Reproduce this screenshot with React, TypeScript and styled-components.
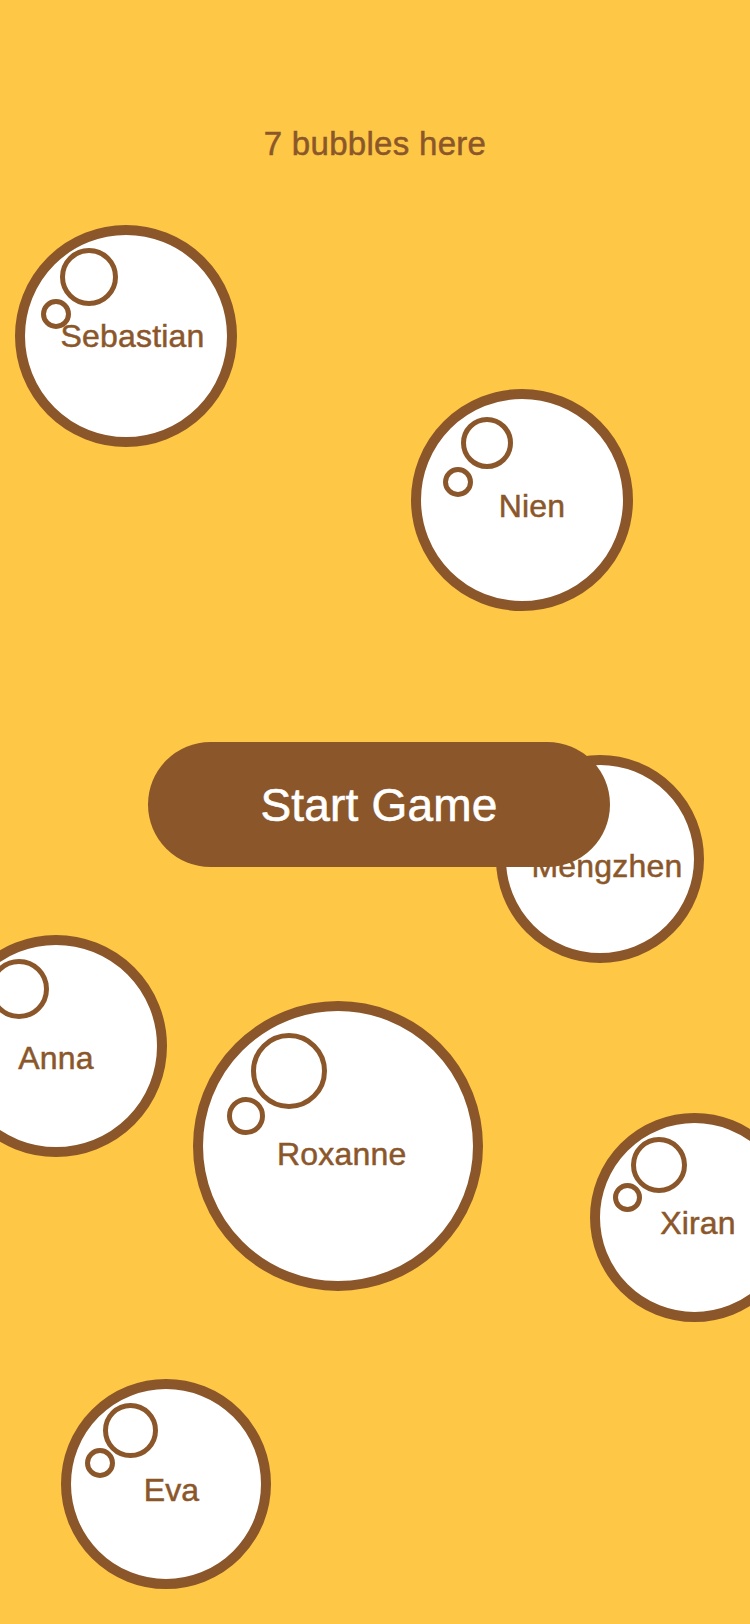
import React from "react";
import styled, { createGlobalStyle } from "styled-components";

const BROWN = "#8B572A";
const YELLOW = "#FEC846";

const GlobalStyle = createGlobalStyle`
  html, body {
    margin: 0;
    padding: 0;
    background: ${YELLOW};
  }
  * {
    box-sizing: border-box;
  }
`;

const Page = styled.main`
  position: relative;
  width: 750px;
  height: 1624px;
  overflow: hidden;
  background: ${YELLOW};
  font-family: "Liberation Sans", Arial, Helvetica, sans-serif;
`;

const Field = styled.div`
  position: absolute;
  inset: 0;
`;

const Bubble = styled.div<{ $x: number; $y: number; $size: number }>`
  position: absolute;
  left: ${(p) => p.$x}px;
  top: ${(p) => p.$y}px;
  width: ${(p) => p.$size}px;
  height: ${(p) => p.$size}px;
  border: 10px solid ${BROWN};
  border-radius: 50%;
  background: #ffffff;
  display: flex;
  align-items: center;
  justify-content: center;
`;

const Ring = styled.span<{ $x: number; $y: number; $size: number }>`
  position: absolute;
  left: ${(p) => p.$x - 10}px;
  top: ${(p) => p.$y - 10}px;
  width: ${(p) => p.$size}px;
  height: ${(p) => p.$size}px;
  border: 5px solid ${BROWN};
  border-radius: 50%;
`;

const Name = styled.span<{ $dx: number; $dy: number }>`
  margin-left: ${(p) => p.$dx * 2}px;
  margin-top: ${(p) => p.$dy * 2}px;
  font-size: 32px;
  line-height: 1.15;
  letter-spacing: 0.2px;
  color: ${BROWN};
  -webkit-text-stroke: 0.5px ${BROWN};
  white-space: nowrap;
`;

const Content = styled.div`
  position: relative;
  z-index: 1;
  display: flex;
  flex-direction: column;
  padding-top: 124px;
`;

const Title = styled.h1`
  margin: 0;
  text-align: center;
  font-size: 33px;
  line-height: 40px;
  font-weight: 400;
  letter-spacing: 0.3px;
  color: ${BROWN};
  -webkit-text-stroke: 0.5px ${BROWN};
`;

const StartButton = styled.button`
  align-self: flex-start;
  margin: 578px 0 0 148px;
  width: 462px;
  height: 125px;
  border: none;
  border-radius: 62.5px;
  background: ${BROWN};
  color: #ffffff;
  font-family: inherit;
  font-size: 46px;
  line-height: 1;
  letter-spacing: 0.2px;
  -webkit-text-stroke: 0.6px #ffffff;
  padding: 0;
  cursor: pointer;
`;

type RingSpec = [number, number, number];

interface BubbleSpec {
  name: string;
  x: number;
  y: number;
  size: number;
  big: RingSpec;
  small: RingSpec;
  dx: number;
  dy: number;
}

const bubbles: BubbleSpec[] = [
  { name: "Sebastian", x: 15, y: 225, size: 222, big: [45, 23, 58], small: [26, 74, 30], dx: 6.5, dy: 0 },
  { name: "Nien", x: 411, y: 389, size: 222, big: [50, 28, 52], small: [32, 78, 30], dx: 10, dy: 6.5 },
  { name: "Mengzhen", x: 496, y: 755, size: 208, big: [43, 24, 55], small: [24, 70, 29], dx: 7, dy: 7 },
  { name: "Anna", x: -55, y: 935, size: 222, big: [44, 24, 60], small: [24, 78, 30], dx: 0, dy: 12 },
  { name: "Roxanne", x: 193, y: 1001, size: 290, big: [58, 32, 76], small: [34, 96, 38], dx: 3.7, dy: 8.5 },
  { name: "Xiran", x: 590, y: 1113, size: 209, big: [41, 24, 56], small: [23, 70, 29], dx: 3.5, dy: 6 },
  { name: "Eva", x: 61, y: 1379, size: 210, big: [42, 24, 55], small: [24, 69, 30], dx: 5.5, dy: 6 },
];

export default function App() {
  return (
    <>
      <GlobalStyle />
      <Page>
        <Field>
          {bubbles.map((b) => (
            <Bubble key={b.name} $x={b.x} $y={b.y} $size={b.size}>
              <Ring $x={b.big[0]} $y={b.big[1]} $size={b.big[2]} />
              <Ring $x={b.small[0]} $y={b.small[1]} $size={b.small[2]} />
              <Name $dx={b.dx} $dy={b.dy}>{b.name}</Name>
            </Bubble>
          ))}
        </Field>
        <Content>
          <Title>{bubbles.length} bubbles here</Title>
          <StartButton type="button">Start Game</StartButton>
        </Content>
      </Page>
    </>
  );
}
